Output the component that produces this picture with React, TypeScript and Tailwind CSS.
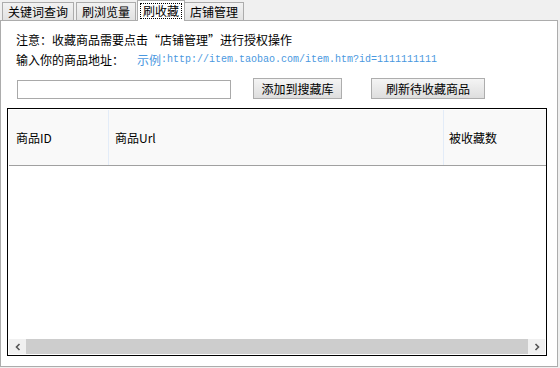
const cn = "font-['SimSun','Noto_Sans_CJK_SC',sans-serif]"

const tabs = ["关键词查询", "刷浏览量", "刷收藏", "店铺管理"]

const ChevronLeft = () => (
    <svg width="8" height="8" viewBox="0 0 8 8"><path d="M5.5 1 L2.5 4 L5.5 7" fill="none" stroke="#555" strokeWidth="1.6" /></svg>
)
const ChevronRight = () => (
    <svg width="8" height="8" viewBox="0 0 8 8"><path d="M2.5 1 L5.5 4 L2.5 7" fill="none" stroke="#555" strokeWidth="1.6" /></svg>
)

export default function App() {
    const active = 2
    return (
        <div className={`w-[560px] h-[368px] bg-[#f0f0f0] text-[12px] text-black ${cn} leading-none`}>
            <div className="flex items-end h-[20px] pl-[2px]">
                {tabs.map((t, i) =>
                    i === active ? (
                        <div key={t} className="relative z-10 h-[21px] -mb-px mx-[-1px] px-[2px] pt-[2px] bg-white border border-b-0 border-[#acacac]">
                            <div className="h-[16px] px-[2px] flex items-center border border-dotted border-black">{t}</div>
                        </div>
                    ) : (
                        <div key={t} className="h-[18px] px-[5px] mr-[2px] flex items-center bg-gradient-to-b from-[#f2f2f2] to-[#e2e2e2] border border-b-0 border-[#acacac]">
                            {t}
                        </div>
                    )
                )}
            </div>
            <div className="h-[347px] w-[558px] bg-white border border-[#acacac] flex flex-col">
                <div className="pl-[15px] pt-[12px] h-[14px] box-content flex items-center">注意：收藏商品需要点击“店铺管理”进行授权操作</div>
                <div className="pl-[15px] pt-[6px] flex items-center h-[14px] box-content">
                    <span>输入你的商品地址：</span>
                    <span className="ml-[13px] text-[#4a98e0]">示例</span>
                    <span className="text-[#4a98e0] font-['Liberation_Mono',monospace] text-[10px]">:http://item.taobao.com/item.htm?id=1111111111</span>
                </div>
                <div className="flex items-start mt-[11px] h-[21px]">
                    <input className="ml-[16px] mt-[2px] w-[214px] h-[19px] border border-[#a9a9a9] outline-none" />
                    <button className="ml-[22px] w-[89px] h-[21px] bg-gradient-to-b from-[#f4f4f4] to-[#dedede] border border-[#adadad] text-[12px] flex items-center justify-center">添加到搜藏库</button>
                    <button className="ml-[29px] w-[114px] h-[21px] bg-gradient-to-b from-[#f4f4f4] to-[#dedede] border border-[#adadad] text-[12px] flex items-center justify-center">刷新待收藏商品</button>
                </div>
                <div className="ml-[6px] mt-[9px] w-[540px] h-[248px] border border-black flex flex-col">
                    <div className="flex h-[56px] bg-[#f9f9f9] border-b border-[#a0a0a0] ml-px mt-px">
                        <div className="w-[100px] flex items-center pl-[7px] border-r border-[#e3ecf8]">商品ID</div>
                        <div className="w-[335px] flex items-center pl-[6px] border-r border-[#e3ecf8]">商品Url</div>
                        <div className="flex-1 flex items-center pl-[5px]">被收藏数</div>
                    </div>
                    <div className="flex-1" />
                    <div className="flex h-[15px] mb-px ml-px mr-px bg-[#cdcdcd]">
                        <div className="w-[17px] bg-[#f0f0f0] flex items-center justify-center"><ChevronLeft /></div>
                        <div className="flex-1" />
                        <div className="w-[17px] bg-[#f0f0f0] flex items-center justify-center"><ChevronRight /></div>
                    </div>
                </div>
            </div>
        </div>
    )
}
